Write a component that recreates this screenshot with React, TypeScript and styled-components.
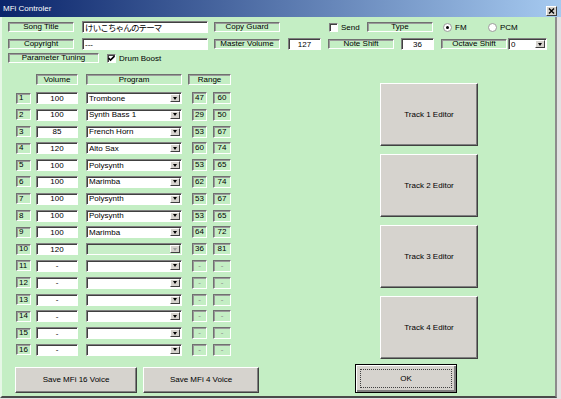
import * as React from 'react'
import styled, { createGlobalStyle } from 'styled-components'

const GREEN = '#c4eec4'
const FACE = '#d6d3ce'

const GlobalStyle = createGlobalStyle`
  html, body {
    margin: 0;
    padding: 0;
    background: ${GREEN};
  }
  body {
    font-family: "Liberation Sans", Arial, sans-serif;
    font-size: 8px;
    color: #000;
  }
  * {
    box-sizing: border-box;
  }
`

const Window = styled.div`
  width: 561px;
  height: 399px;
  display: flex;
  flex-direction: column;
  background: #e2e2e2;
  overflow: hidden;
`

const TitleBar = styled.div`
  height: 17px;
  flex: none;
  display: flex;
  align-items: center;
  justify-content: space-between;
  padding: 0 4px 0 3px;
  background: linear-gradient(to right, #0a246a, #a6caf0);
  color: #fff;
  font-size: 8px;
`

const CloseButton = styled.div`
  width: 11px;
  height: 10px;
  margin-top: 4px;
  display: flex;
  align-items: center;
  justify-content: center;
  background: ${FACE};
  border: 1px solid;
  border-color: #fff #404040 #404040 #fff;
`

const Body = styled.div`
  flex: 1;
  display: flex;
  flex-direction: column;
  background: ${GREEN};
  border-left: 2px solid #e6f7e6;
  border-right: 2px solid #8c8c8c;
  border-bottom: 2px solid #4a4a4a;
  margin: 0 4px 1px 0;
  padding: 4px 0 0 6px;
`

const Row = styled.div<{ $mt?: number }>`
  display: flex;
  align-items: center;
  height: 12px;
  margin-top: ${p => p.$mt || 0}px;
`

const Static = styled.div<{ $w: number; $ml?: number; $h?: number; $align?: string; $muted?: boolean }>`
  width: ${p => p.$w}px;
  height: ${p => p.$h || 10}px;
  margin-left: ${p => p.$ml || 0}px;
  flex: none;
  display: flex;
  align-items: center;
  justify-content: ${p => p.$align || 'center'};
  padding: 0 2px;
  background: ${GREEN};
  border: 1px solid;
  border-color: #707070 #fff #fff #707070;
  box-shadow: inset 1px 1px #9a9a9a;
  color: ${p => (p.$muted ? '#8a8a8a' : '#000')};
  white-space: nowrap;
  line-height: 8px;
`

const Field = styled.div<{ $w: number; $ml?: number; $align?: string; $jp?: boolean }>`
  width: ${p => p.$w}px;
  height: 12px;
  margin-left: ${p => p.$ml || 0}px;
  flex: none;
  display: flex;
  align-items: center;
  justify-content: ${p => p.$align || 'flex-start'};
  padding: 0 2px;
  background: #fff;
  border: 1px solid;
  border-color: #808080 #fff #fff #808080;
  box-shadow: inset 1px 1px #404040;
  white-space: nowrap;
  overflow: hidden;
  font-family: ${p => (p.$jp ? '"Liberation Sans", "Noto Sans CJK JP", sans-serif' : 'inherit')};
  font-size: ${p => (p.$jp ? '8.5px' : '8px')};
  letter-spacing: ${p => (p.$jp ? '-0.85px' : '0')};
`

const SelectBox = styled.div<{ $w: number; $ml?: number; $disabled?: boolean }>`
  width: ${p => p.$w}px;
  height: 12px;
  margin-left: ${p => p.$ml || 0}px;
  flex: none;
  display: flex;
  align-items: center;
  padding: 0 1px 0 2px;
  background: ${p => (p.$disabled ? '#c8eec8' : '#fff')};
  border: 1px solid;
  border-color: #808080 #fff #fff #808080;
  box-shadow: inset 1px 1px #404040;
  white-space: nowrap;
  justify-self: end;
`

const SelectText = styled.span`
  flex: 1;
  overflow: hidden;
`

const ArrowBtn = styled.span<{ $disabled?: boolean }>`
  flex: none;
  width: 10px;
  height: 8px;
  display: flex;
  align-items: center;
  justify-content: center;
  background: ${FACE};
  border: 1px solid;
  border-color: #fff #404040 #404040 #fff;
  &::after {
    content: '';
    border-left: 2.5px solid transparent;
    border-right: 2.5px solid transparent;
    border-top: 3px solid ${p => (p.$disabled ? '#a0a0a0' : '#000')};
  }
`

const CheckGroup = styled.div<{ $w?: number; $ml?: number }>`
  display: flex;
  align-items: center;
  gap: 3px;
  flex: none;
  width: ${p => (p.$w ? `${p.$w}px` : 'auto')};
  margin-left: ${p => p.$ml || 0}px;
`

const CheckBox = styled.span`
  width: 9px;
  height: 9px;
  flex: none;
  display: flex;
  align-items: center;
  justify-content: center;
  background: #fff;
  border: 1px solid;
  border-color: #808080 #fff #fff #808080;
  box-shadow: inset 1px 1px #404040;
`

const Main = styled.div`
  display: flex;
  margin-top: 10px;
`

const LeftCol = styled.div`
  width: 347px;
  flex: none;
  display: flex;
  flex-direction: column;
`

const Grid = styled.div`
  display: grid;
  grid-template-columns: 15px 47px 104px 25px 24px;
  grid-auto-rows: 12px;
  row-gap: 4.8px;
  padding-left: 8px;
  align-items: center;
  justify-items: end;
`

const HeaderGrid = styled(Grid)`
  grid-auto-rows: 11px;
`

const Cell = styled(Static)<{ $span?: string }>`
  grid-column: ${p => p.$span || 'auto'};
  height: ${p => p.$h || 11}px;
`

const SaveRow = styled.div`
  display: flex;
  margin-top: 11px;
  padding-left: 7px;
  gap: 6px;
`

const Button = styled.div<{ $w: number; $h: number }>`
  width: ${p => p.$w}px;
  height: ${p => p.$h}px;
  flex: none;
  display: flex;
  align-items: center;
  justify-content: center;
  background: ${FACE};
  border: 1px solid;
  border-color: #fff #404040 #404040 #fff;
  box-shadow: inset -1px -1px #808080;
`

const RightCol = styled.div`
  display: flex;
  flex-direction: column;
  padding-top: 9px;
`

const TrackList = styled.div`
  display: flex;
  flex-direction: column;
  gap: 8px;
  margin-left: 25px;
`

const OkButton = styled(Button)`
  margin-top: 5px;
  border: 1px solid #000;
  box-shadow: inset 1px 1px #fff, inset -2px -2px #808080;
  padding: 4px;
`

const FocusRect = styled.span`
  flex: 1;
  align-self: stretch;
  display: flex;
  align-items: center;
  justify-content: center;
  border: 1px dotted #404040;
`

const tracks = [
  { n: 1, vol: '100', prog: 'Trombone', lo: '47', hi: '60' },
  { n: 2, vol: '100', prog: 'Synth Bass 1', lo: '29', hi: '50' },
  { n: 3, vol: '85', prog: 'French Horn', lo: '53', hi: '67' },
  { n: 4, vol: '120', prog: 'Alto Sax', lo: '60', hi: '74' },
  { n: 5, vol: '100', prog: 'Polysynth', lo: '53', hi: '65' },
  { n: 6, vol: '100', prog: 'Marimba', lo: '62', hi: '74' },
  { n: 7, vol: '100', prog: 'Polysynth', lo: '53', hi: '67' },
  { n: 8, vol: '100', prog: 'Polysynth', lo: '53', hi: '65' },
  { n: 9, vol: '100', prog: 'Marimba', lo: '64', hi: '72' },
  { n: 10, vol: '120', prog: '', lo: '36', hi: '81', disabled: true },
  ...[11, 12, 13, 14, 15, 16].map(n => ({ n, vol: '-', prog: '', lo: '-', hi: '-', empty: true }))
] as { n: number; vol: string; prog: string; lo: string; hi: string; disabled?: boolean; empty?: boolean }[]

const Check = () => (
  <svg width="7" height="7" viewBox="0 0 7 7">
    <path d="M0.5 3 L2.5 5 L6.5 1" fill="none" stroke="#000" strokeWidth="1.6" />
  </svg>
)

const Radio = ({ on }: { on?: boolean }) => (
  <svg width="9" height="9" viewBox="0 0 9 9">
    <circle cx="4.5" cy="4.5" r="4" fill="#fff" stroke="#9a9a9a" strokeWidth="1" />
    {on && <circle cx="4.5" cy="4.5" r="1.5" fill="#000" />}
  </svg>
)

export default function App() {
  return (
    <Window>
      <GlobalStyle />
      <TitleBar>
        <span>MFi Controler</span>
        <CloseButton>
          <svg width="7" height="6" viewBox="0 0 7 6">
            <path d="M1 0.5 L6 5.5 M6 0.5 L1 5.5" stroke="#000" strokeWidth="1.4" />
          </svg>
        </CloseButton>
      </TitleBar>
      <Body>
        <Row>
          <Static $w={66}>Song Title</Static>
          <Field $w={126} $ml={8} $jp>けいこちゃんのテーマ</Field>
          <Static $w={66} $ml={6}>Copy Guard</Static>
          <CheckGroup $w={38} $ml={49}>
            <CheckBox />
            <span>Send</span>
          </CheckGroup>
          <Static $w={66}>Type</Static>
          <CheckGroup $w={45} $ml={10}>
            <Radio on />
            <span>FM</span>
          </CheckGroup>
          <CheckGroup>
            <Radio />
            <span>PCM</span>
          </CheckGroup>
        </Row>
        <Row $mt={5}>
          <Static $w={66}>Copyright</Static>
          <Field $w={126} $ml={8}>---</Field>
          <Static $w={66} $ml={6}>Master Volume</Static>
          <Field $w={33} $ml={8} $align="center">127</Field>
          <Static $w={66} $ml={7}>Note Shift</Static>
          <Field $w={33} $ml={7} $align="center">36</Field>
          <Static $w={66} $ml={7}>Octave Shift</Static>
          <SelectBox $w={39} $ml={1}>
            <SelectText>0</SelectText>
            <ArrowBtn />
          </SelectBox>
        </Row>
        <Row $mt={2}>
          <Static $w={91}>Parameter Tuning</Static>
          <CheckGroup $ml={8}>
            <CheckBox>
              <Check />
            </CheckBox>
            <span>Drum Boost</span>
          </CheckGroup>
        </Row>
        <Main>
          <LeftCol>
            <HeaderGrid>
              <span />
              <Cell $w={42}>Volume</Cell>
              <Cell $w={96}>Program</Cell>
              <Cell $w={43} $span="4 / 6">Range</Cell>
            </HeaderGrid>
            <Grid style={{ marginTop: 7 }}>
              {tracks.map(t => (
                <React.Fragment key={t.n}>
                  <Cell $w={15} $align="flex-start">{t.n}</Cell>
                  <Field $w={42} $align="center" style={{ justifySelf: 'end' }}>{t.vol}</Field>
                  <SelectBox $w={96} $disabled={t.disabled}>
                    <SelectText>{t.prog}</SelectText>
                    <ArrowBtn $disabled={t.disabled} />
                  </SelectBox>
                  <Cell $w={15} $h={12} $muted={t.empty}>{t.lo}</Cell>
                  <Cell $w={18} $h={12} $muted={t.empty}>{t.hi}</Cell>
                </React.Fragment>
              ))}
            </Grid>
            <SaveRow>
              <Button $w={122} $h={26}>Save MFi 16 Voice</Button>
              <Button $w={116} $h={26}>Save MFi 4 Voice</Button>
            </SaveRow>
          </LeftCol>
          <RightCol>
            <TrackList>
              {[1, 2, 3, 4].map(n => (
                <Button key={n} $w={98} $h={63}>Track {n} Editor</Button>
              ))}
            </TrackList>
            <OkButton $w={102} $h={29}>
              <FocusRect>OK</FocusRect>
            </OkButton>
          </RightCol>
        </Main>
      </Body>
    </Window>
  )
}
